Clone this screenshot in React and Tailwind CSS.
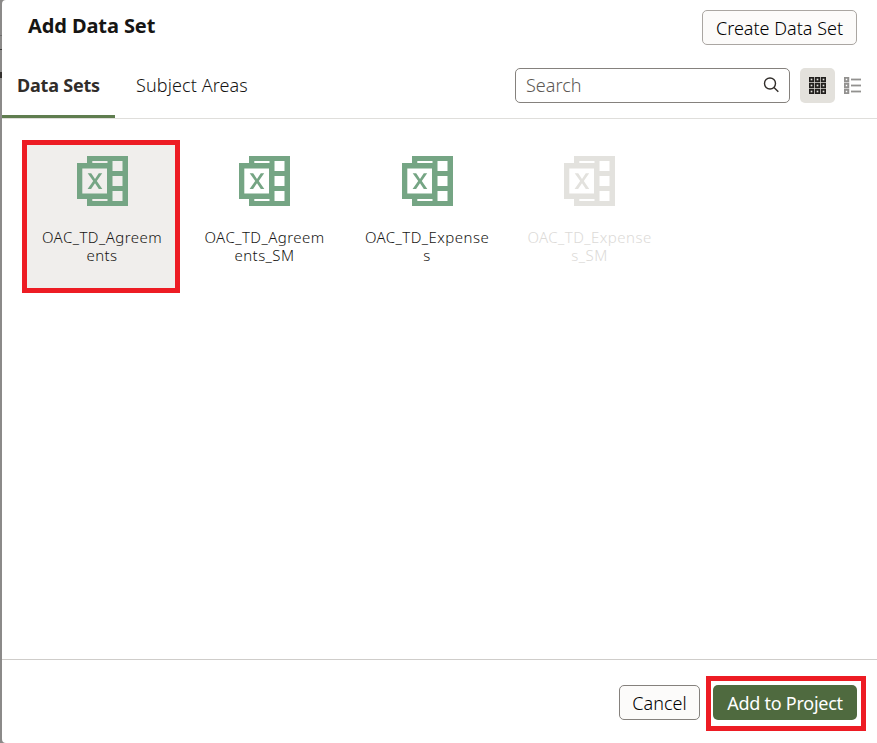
import React from "react";

const DATA_SETS = [
  { lines: ["OAC_TD_Agreem", "ents"], selected: true },
  { lines: ["OAC_TD_Agreem", "ents_SM"] },
  { lines: ["OAC_TD_Expense", "s"] },
  { lines: ["OAC_TD_Expense", "s_SM"], disabled: true },
];

function SheetIcon() {
  return (
    <svg width="51" height="50" viewBox="0 0 51 50" fill="currentColor" aria-hidden="true">
      <path
        fillRule="evenodd"
        d="M10 0H51V50H10V43H0V7H10ZM15.3 5V7H30.5V5ZM35.5 5V15H45.5V5ZM35.5 20V30H45.5V20ZM35.5 35V45H45.5V35ZM15.3 43V45H30.5V43ZM5.3 12.5V37.5H30V12.5Z"
      />
      <path d="M10.7 17.3h3.5l3.8 5.600 3.800-5.600h3.400l-5.400 7.700 5.500 7.900h-3.500L18 27.200l-3.900 5.700h-3.500l5.600-7.900z" />
    </svg>
  );
}

function GridIcon() {
  const cells = [0, 6, 12];
  return (
    <svg width="17" height="17" viewBox="0 0 17 17" fill="none" stroke="currentColor" strokeWidth="1.8" aria-hidden="true">
      {cells.map((y) => cells.map((x) => <rect key={`${x}-${y}`} x={x + 0.75} y={y + 0.75} width="3.5" height="3.5" />))}
    </svg>
  );
}

function ListIcon() {
  return (
    <svg width="17" height="17" viewBox="0 0 17 17" fill="none" stroke="currentColor" aria-hidden="true">
      {[0, 6, 12].map((y) => (
        <g key={y}>
          <rect x="0.75" y={y + 0.75} width="3.5" height="3.5" strokeWidth="2" />
          <path d={`M7 ${y + 2.5}H17`} strokeWidth="1.8" />
        </g>
      ))}
    </svg>
  );
}

function DataSetTile({ lines, selected, disabled }) {
  return (
    <div
      className={`flex h-[153px] w-[158px] flex-col items-center border-5 pt-[11px] pl-[2px] ${
        selected ? "border-[#ed1c24] bg-[#f0eeec]" : "border-transparent"
      } ${disabled ? "text-[#e3e2de]" : "text-[#75a584]"}`}
    >
      <SheetIcon />
      <div
        className={`mt-[22px] text-center text-[15px] leading-[18px] tracking-[0.45px] ${
          disabled ? "text-[#dcdad7]" : "text-[#161513]"
        }`}
      >
        {lines.map((line) => (
          <div key={line} className="whitespace-nowrap">{line}</div>
        ))}
      </div>
    </div>
  );
}

export default function App() {
  return (
    <div className="flex h-[743px] w-[877px] overflow-hidden bg-[#8b8a89] font-['Noto_Sans',sans-serif] font-light">
      <div className="flex w-[2px] shrink-0 flex-col">
        <div className="mt-[35px] h-px bg-[#6f6e6d]" />
        <div className="mt-[13px] h-px bg-[#3a3938]" />
        <div className="mt-[22px] h-[6px] bg-[#33312f]" />
      </div>
      <div className="flex h-full w-[875px] flex-col rounded-l-[4px] bg-white">
        <header className="flex h-[50px] shrink-0 items-start justify-between pr-5 pl-[26px]">
          <h1 className="mt-[11px] text-[20px] leading-[30px] font-bold tracking-[-0.1px] text-[#161513]">Add Data Set</h1>
          <button className="mt-[10px] h-[35px] w-[155px] rounded-[5px] border border-[#aaa6a2] bg-[#fcfbfa] pt-px text-[18px] whitespace-nowrap text-black">
            Create Data Set
          </button>
        </header>
        <nav className="flex h-[69px] shrink-0 border-b border-[#dfdedb]">
          <div className="-mb-px flex h-[68px] w-[113px] items-center border-b-3 border-[#5f7d4f] pt-[5px] pl-[15px] text-[18px] font-bold tracking-[-0.2px] whitespace-nowrap text-[#312d2a]">
            Data Sets
          </div>
          <div className="flex h-[65px] items-center pt-[5px] pl-[21px] text-[18px] tracking-[0.1px] whitespace-nowrap text-[#161513]">
            Subject Areas
          </div>
          <div className="mt-[18px] mr-[7px] ml-auto flex h-[35px] items-center">
            <div className="flex h-[35px] w-[275px] items-center justify-between rounded-[5px] border border-[#85817d] pr-[10px] pl-[10px] text-[18px] text-[#5c5854]">
              <span>Search</span>
              <svg className="-mt-[2px]" width="16" height="16" viewBox="0 0 16 16" fill="none" stroke="#312d2a" strokeWidth="1.4" aria-hidden="true">
                <circle cx="7" cy="6.500" r="5.500" />
                <path d="M11 10.500L15.300 14.800" />
              </svg>
            </div>
            <div className="ml-[10px] flex h-[35px] w-[35px] items-center justify-center rounded-[5px] bg-[#e3e1dc] text-[#201e1c]">
              <GridIcon />
            </div>
            <div className="flex h-[35px] w-[35px] items-center justify-center text-[#92918f]">
              <ListIcon />
            </div>
          </div>
        </nav>
        <main className="flex flex-1 items-start gap-[4.5px] pt-[21px] pl-5">
          {DATA_SETS.map((item) => (
            <DataSetTile key={item.lines.join("")} {...item} />
          ))}
        </main>
        <footer className="flex h-[84px] shrink-0 items-start justify-end border-t border-[#cfcdca] pt-[16px] pr-[11px] text-[18px]">
          <button className="mt-[9px] mr-[6px] h-[35px] w-[81px] rounded-[5px] border border-[#85817d] bg-[#fcfbfa] pt-px text-black">
            Cancel
          </button>
          <div className="flex h-[55px] w-[160px] border-5 border-[#ed1c24] pt-1 pl-[2px]">
            <button className="h-[35px] w-[144px] rounded-[5px] bg-[#4f6a3f] pt-px font-normal tracking-[-0.25px] whitespace-nowrap text-white">
              Add to Project
            </button>
          </div>
        </footer>
      </div>
    </div>
  );
}
